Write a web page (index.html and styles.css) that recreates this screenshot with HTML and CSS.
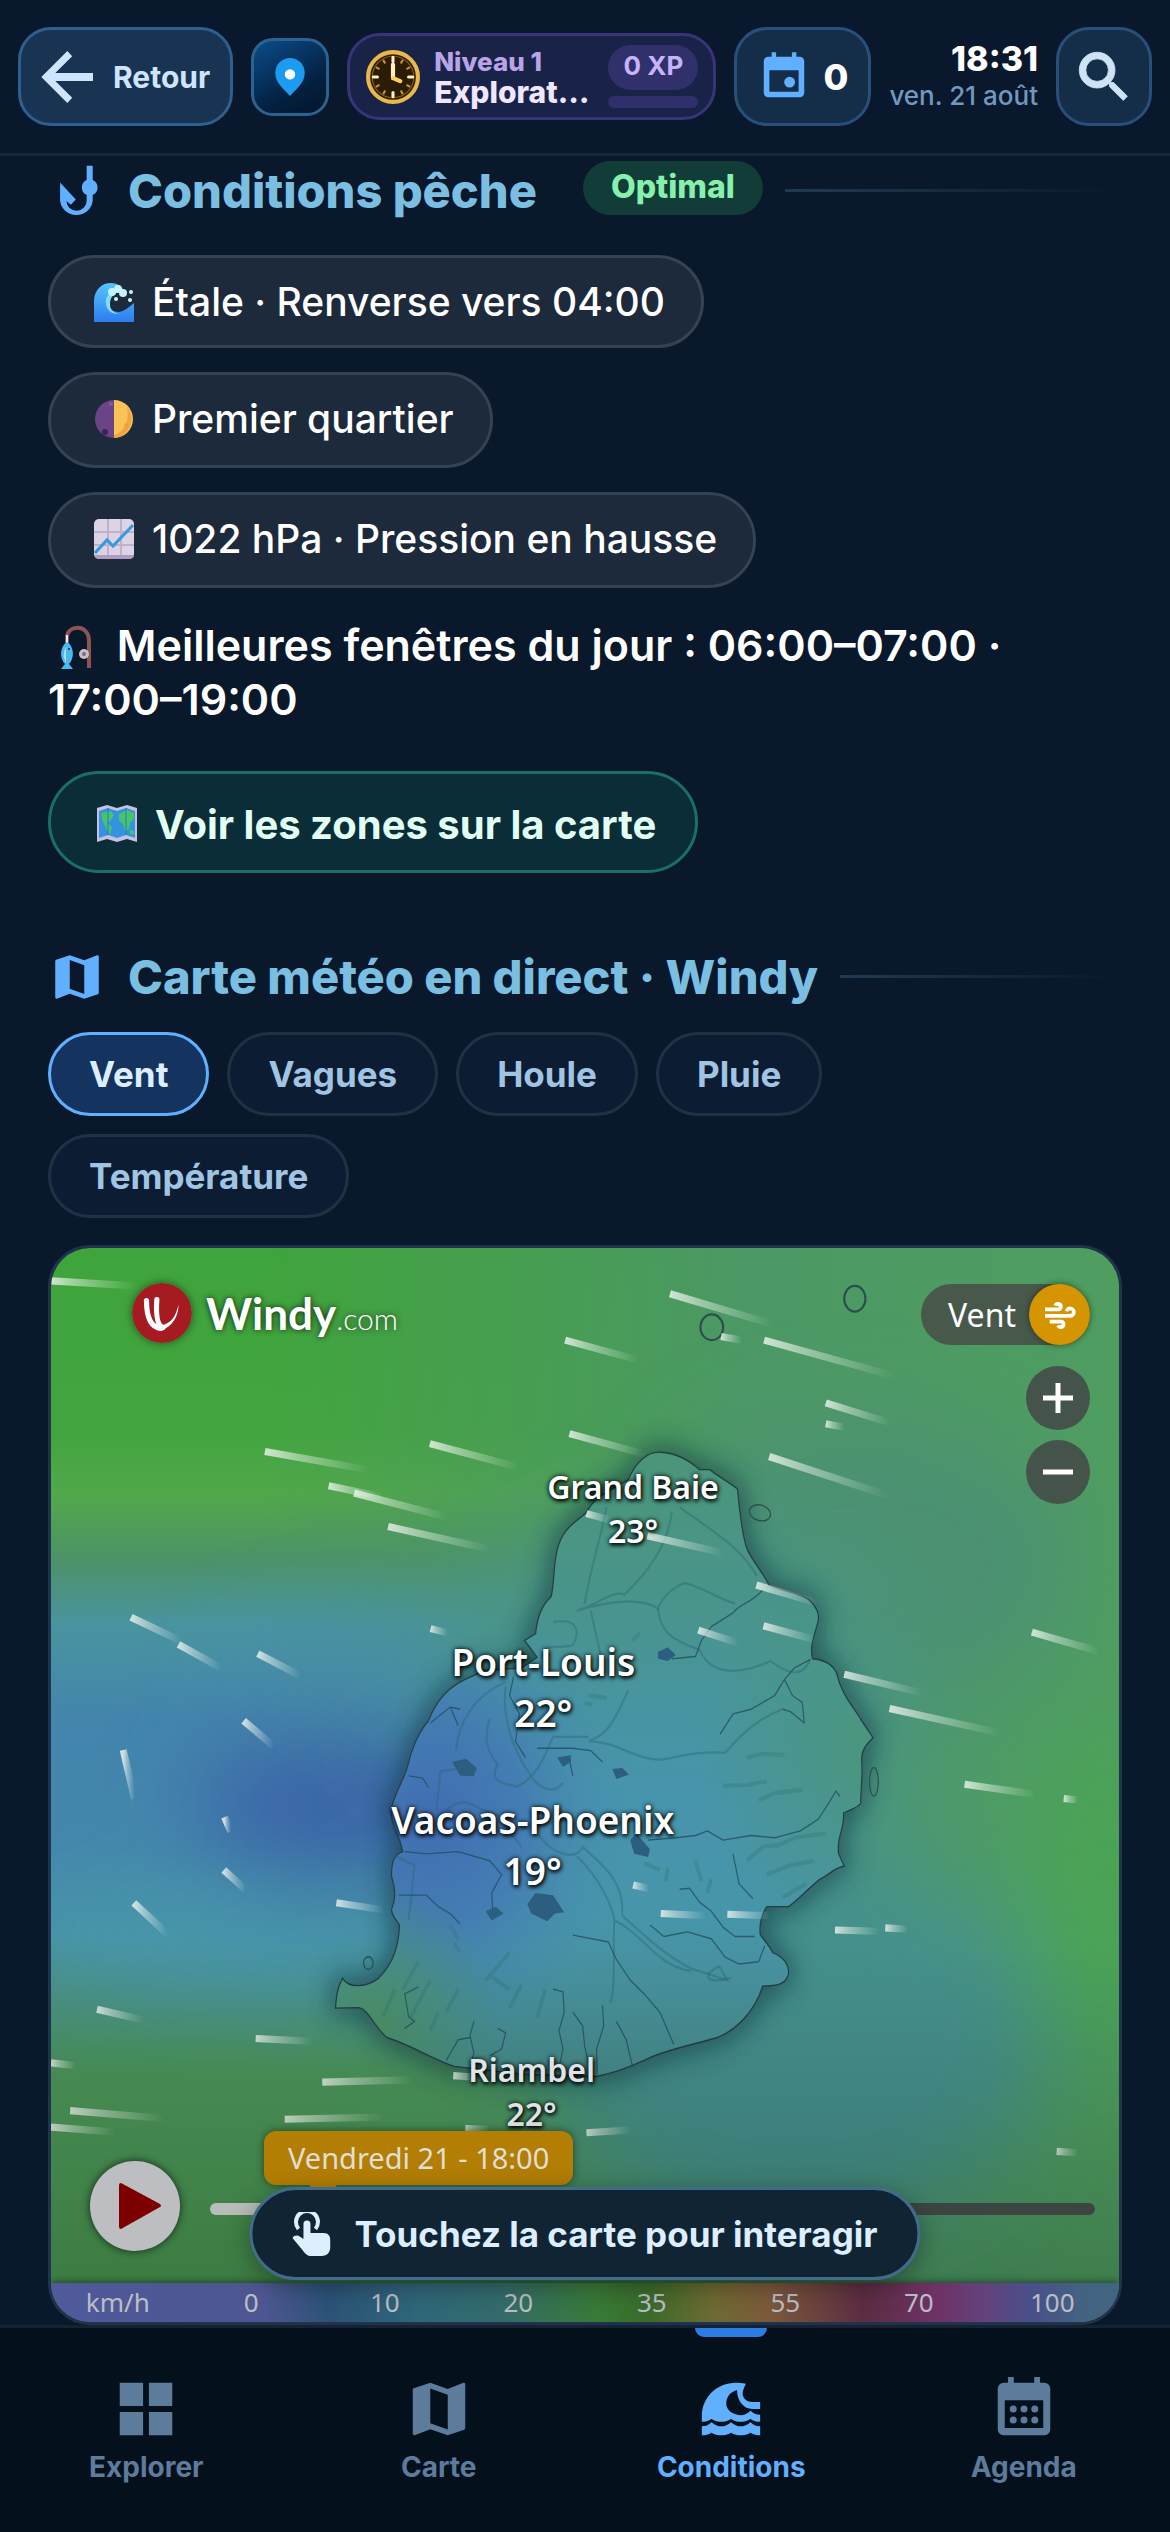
FILE: index.html
```
<!DOCTYPE html>
<html lang="fr">
<head>
  <meta charset="UTF-8" />
  <meta name="viewport" content="width=device-width, initial-scale=1.0"/>
  <title>Conditions</title>
  <link rel="stylesheet" href="styles.css">
</head>
<body>

  <!-- Barre du haut -->
  <header class="topbar">
    <button class="top-btn back-btn">
      <svg class="back-icon" viewBox="4 4 16 16"><path d="M20 10.800v2.400H8.400l5.200 5.200-1.500 1.600L4.100 12l8-8 1.500 1.600-5.200 5.200z"/></svg>
      Retour
    </button>

    <button class="pin-btn" aria-label="Position">
      <svg viewBox="0 0 34 44"><path d="M17 0a17 17 0 0 1 17 18c0 11-11 19-17 26C11 37 0 29 0 18A17 17 0 0 1 17 0z" fill="#1c9cf0"/><circle cx="17" cy="19" r="6" fill="#fff"/></svg>
    </button>

    <div class="level">
      <svg class="medal" viewBox="0 0 52 52">
        <circle cx="26" cy="26" r="24" fill="#2b1d05" stroke="#e8b84a" stroke-width="4"/>
        <circle cx="26" cy="26" r="20" fill="none" stroke="#8a6418"/>
        <g stroke="#fff0c4" stroke-width="3" stroke-linecap="round"><path d="M26 7v4M26 41v4M7 26h4M41 26h4"/></g>
        <g stroke="#c8922c" stroke-width="2"><path d="M16.500 9.500l2 3.500M35.500 9.500l-2 3.500M16.500 42.500l2-3.500M35.500 42.500l-2-3.500M9.500 16.500l3.500 2M42.500 16.500l-3.500 2M9.500 35.500l3.500-2M42.500 35.500l-3.500-2"/></g>
        <path d="M26 27V14" stroke="#fff0c4" stroke-width="4" stroke-linecap="round"/>
        <path d="M26 27l7 3" stroke="#ffd057" stroke-width="4" stroke-linecap="round"/>
      </svg>
      <div class="level-text">
        <span class="level-num">Niveau 1</span>
        <span class="level-name">Explorat…</span>
      </div>
      <div class="xp">
        <span class="xp-value">0 XP</span>
        <span class="xp-bar"></span>
      </div>
    </div>

    <button class="top-btn agenda-btn">
      <svg class="agenda-icon" viewBox="0 0 24 24"><path fill-rule="evenodd" d="M6.500 1h2v2h7V1h2v2H19a2 2 0 0 1 2 2v14a2 2 0 0 1-2 2H5a2 2 0 0 1-2-2V5a2 2 0 0 1 2-2h1.500zM5.500 9v9.500h13V9z"/><circle cx="14.500" cy="14.300" r="2.400"/></svg>
      0
    </button>

    <div class="clock">
      <strong>18:31</strong>
      <span>ven. 21 août</span>
    </div>

    <button class="top-btn search-btn" aria-label="Rechercher">
      <svg viewBox="0 0 24 24"><path d="M9.500,3A6.500,6.500 0 0,1 16,9.500C16,11.110 15.410,12.590 14.440,13.730L14.710,14H15.500L20.500,19L19,20.500L14,15.500V14.710L13.730,14.440C12.590,15.410 11.110,16 9.500,16A6.500,6.500 0 0,1 3,9.500A6.500,6.500 0 0,1 9.500,3M9.500,5.400A4.100,4.100 0 1,0 9.500,13.600A4.100,4.100 0 1,0 9.500,5.400Z" stroke="currentColor" stroke-width=".3"/></svg>
    </button>
  </header>

  <main class="content">

    <!-- Conditions pêche -->
    <section class="fishing">
      <h2 class="section-title">
        <svg viewBox="0 0 24 24"><path d="M16 1.500h2.500V7.400a3.400 3.400 0 0 1 0 6.200V16A6.800 6.800 0 0 1 5 16V8.500l6.500 7-2 2.200-1.900-1.600a4.200 4.200 0 0 0 8.400-.3v-2.200a3.400 3.400 0 0 1 0-6.200z"/></svg>
        Conditions pêche
        <span class="badge">Optimal</span>
      </h2>

      <ul class="pills">
        <li class="pill">
          <svg class="emoji" viewBox="0 0 40 40">
            <defs><linearGradient id="sea" x1="0" y1="0" x2="0" y2="1"><stop offset="0" stop-color="#53c6fb"/><stop offset="1" stop-color="#2e7cf0"/></linearGradient></defs>
            <path d="M0 40V18C1 7 8 1 17 1c6 0 11 3 13 8l-8 2c-7 0-9 5-8 10 1 6 5 9 11 9 6-1 10-5 15-9v19z" fill="url(#sea)"/>
            <path d="M24 10c-10 0-13 5-12 12 1 7 6 10 13 10-7-2-9-5-9-10 0-5 2-9 8-12z" fill="#7fe0f5"/>
            <g fill="#c5f4ff"><circle cx="18" cy="10" r="4"/><circle cx="24" cy="7" r="4"/><circle cx="29" cy="11" r="4"/><circle cx="37" cy="10" r="2"/><circle cx="36" cy="18" r="2"/><circle cx="22" cy="17" r="2"/></g>
          </svg>
          Étale · Renverse vers 04:00
        </li>
        <li class="pill pill-tall">
          <svg class="emoji" viewBox="0 0 40 40">
            <path d="M20 1a19 19 0 0 0 0 38z" fill="#6b4487"/>
            <path d="M20 1a19 19 0 0 1 0 38z" fill="#fbc255"/>
            <path d="M33 8a19 19 0 0 1-13 31v-3c10-2 16-15 13-28z" fill="#f0a63e"/>
            <circle cx="11" cy="33" r="3" fill="#3a2456"/><circle cx="17" cy="5" r="2" fill="#83599e"/><circle cx="32" cy="26" r="2" fill="#eda13e"/>
          </svg>
          Premier quartier
        </li>
        <li class="pill pill-tall">
          <svg class="emoji" viewBox="0 0 40 40">
            <rect width="40" height="40" rx="5" fill="#dcd3e4"/>
            <path d="M0 13h40M0 26h40M14 0v40M27 0v40" stroke="#bdb2c9" stroke-width="2"/>
            <path d="M1 34l12-13 6 6L39 6" fill="none" stroke="#3a98de" stroke-width="3"/>
            <path d="M1 36c0 3 2 4 5 4h28c3 0 6-1 6-4z" fill="#b19cc2"/>
          </svg>
          1022 hPa · Pression en hausse
        </li>
      </ul>

      <p class="windows">
        <svg class="rod" viewBox="0 0 52 44">
          <path d="M19 18V12C19 0 41-2 41 16v27" fill="none" stroke="#8a5553" stroke-width="4"/>
          <path d="M19 10v10" stroke="#e5eef5" stroke-width="2"/>
          <circle cx="36" cy="29" r="5" fill="#cabdcb"/><circle cx="36" cy="29" r="2" fill="#7a6a80"/>
          <path d="M19 17c7 4 8 16 2 22l4 5H13l4-5c-6-6-5-18 2-22z" fill="#4bb9ee"/><path d="M18 22c-3 5-3 11 0 16z" fill="#9fe3fb"/><circle cx="21" cy="24" r="1" fill="#124"/>
        </svg>
        Meilleures fenêtres du jour : 06:00–07:00 · 17:00–19:00
      </p>

      <button class="zones-btn">
        <svg class="emoji" viewBox="0 0 40 40">
          <path d="M0 4l10-3 10 3 10-3 10 3v34l-10-3-10 3-10-3-10 3z" fill="#c8c0e0"/>
          <path d="M2 7l9-3 9 3 9-3 9 3v27l-9-3-9 3-9-3-9 3z" fill="#3592df"/>
          <path d="M4 9l10-2 3 4-3 5-4 3 5 4-2 8-4-7-4-8zM22 10l8-4 7 3v6l-4 4-1 6-4 3-2-8-4-3zM33 26l4 1v4l-4-1z" fill="#45c46c"/>
          <path d="M11 4v27M29 4v27" stroke="#2c79c8"/>
        </svg>
        Voir les zones sur la carte
      </button>
    </section>

    <!-- Carte Windy -->
    <section class="weather">
      <h2 class="section-title">
        <svg viewBox="0 0 24 24"><path d="M15,19L9,16.890V5L15,7.110M20.500,3C20.440,3 20.390,3 20.340,3L15,5.100L9,3L3.360,4.900C3.150,4.970 3,5.150 3,5.380V20.500A0.500,0.500 0 0,0 3.500,21C3.550,21 3.610,21 3.660,20.970L9,18.900L15,21L20.640,19.100C20.850,19 21,18.850 21,18.620V3.500A0.500,0.500 0 0,0 20.500,3Z"/></svg>
        Carte météo en direct · Windy
      </h2>

      <div class="chips">
        <button class="chip active">Vent</button>
        <button class="chip">Vagues</button>
        <button class="chip">Houle</button>
        <button class="chip">Pluie</button>
        <button class="chip">Température</button>
      </div>

      <div class="map">
        <svg class="map-canvas" viewBox="30 39 1508 1504" preserveAspectRatio="none">
          <defs>
            <filter id="soft" x="-60%" y="-60%" width="220%" height="220%"><feGaussianBlur stdDeviation="65"/></filter>
            <filter id="halo" x="-20%" y="-20%" width="140%" height="140%"><feGaussianBlur stdDeviation="32"/></filter>
            <linearGradient id="base" x1="0" y1="0" x2="0" y2="1">
              <stop offset="0" stop-color="#3fa43c"/><stop offset=".17" stop-color="#42a53e"/><stop offset=".23" stop-color="#50a84a"/>
              <stop offset=".29" stop-color="#4d9268"/><stop offset=".35" stop-color="#49949f"/><stop offset=".44" stop-color="#4385ad"/>
              <stop offset=".56" stop-color="#4488ac"/><stop offset=".64" stop-color="#4794a8"/><stop offset=".7" stop-color="#4a927f"/>
              <stop offset=".77" stop-color="#4b9558"/><stop offset="1" stop-color="#4b9c52"/>
            </linearGradient>
            <linearGradient id="east" x1="0" y1="0" x2="1" y2="0">
              <stop offset=".2" stop-color="#4c9663" stop-opacity="0"/><stop offset=".65" stop-color="#4d976a" stop-opacity=".9"/><stop offset="1" stop-color="#4f9e60"/>
            </linearGradient>
            <linearGradient id="dim" x1="0" y1="0" x2="0" y2="1">
              <stop offset=".65" stop-opacity="0"/><stop offset="1" stop-opacity=".22"/>
            </linearGradient>
            <linearGradient id="landTint" x1="0" y1="0" x2="0" y2="1">
              <stop offset="0" stop-color="#4b9679"/><stop offset=".25" stop-color="#49948c"/><stop offset=".4" stop-color="#4795a0"/>
              <stop offset=".55" stop-color="#4794ad"/><stop offset=".75" stop-color="#4795aa"/><stop offset="1" stop-color="#468c8a"/>
            </linearGradient>
            <radialGradient id="landBlue" gradientUnits="userSpaceOnUse" cx="330" cy="870" r="520">
              <stop offset="0" stop-color="#416cb2"/><stop offset=".45" stop-color="#4379b4" stop-opacity=".85"/><stop offset="1" stop-color="#4590ae" stop-opacity="0"/>
            </radialGradient>
            <radialGradient id="landGreen" gradientUnits="userSpaceOnUse" cx="180" cy="1330" r="330">
              <stop offset="0" stop-color="#4b9165"/><stop offset="1" stop-color="#4b9165" stop-opacity="0"/>
            </radialGradient>
            <radialGradient id="landEast" gradientUnits="userSpaceOnUse" cx="1450" cy="720" r="450">
              <stop offset="0" stop-color="#4b967b"/><stop offset="1" stop-color="#4b967b" stop-opacity="0"/>
            </radialGradient>
            <linearGradient id="tail" x1="0" y1="0" x2="1" y2="0">
              <stop offset="0" stop-color="#f2f7f0" stop-opacity=".8"/><stop offset=".3" stop-color="#f2f7f0" stop-opacity=".5"/><stop offset="1" stop-color="#f2f7f0" stop-opacity="0"/>
            </linearGradient>
            <path id="coast" d="M912 70C950 72 985 88 1010 108L1036 108C1060 125 1085 135 1106 150C1112 200 1118 250 1130 280C1145 310 1170 330 1186 360C1220 374 1255 374 1285 390C1310 410 1315 425 1308 445C1300 470 1288 495 1296 520C1320 522 1345 530 1356 550C1370 600 1400 625 1420 655L1449 692C1435 705 1420 715 1420 740C1424 780 1416 810 1418 835C1405 848 1385 850 1374 856C1378 890 1355 910 1362 945L1376 972C1350 975 1340 990 1315 1000C1285 1020 1260 1045 1235 1060L1180 1060C1168 1075 1160 1100 1164 1122C1180 1140 1190 1150 1195 1160C1225 1170 1240 1190 1234 1210C1225 1235 1190 1232 1170 1233C1150 1290 1100 1330 1055 1345C1000 1360 920 1372 870 1395C820 1415 780 1425 750 1430L560 1425L390 1408C330 1390 290 1365 220 1345C190 1325 175 1285 150 1280L90 1281C92 1255 95 1235 108 1216C125 1240 170 1235 200 1215C240 1180 250 1140 252 1100C240 1085 230 1075 232 1065C245 1040 240 1015 232 995C230 965 240 945 260 940C255 910 232 890 230 850C240 810 265 780 272 755C280 720 300 680 325 655C345 610 375 580 430 560L470 545L560 540L600 517L568 480L596 465C600 430 610 405 635 385C645 350 640 300 655 270C670 230 710 215 725 200C740 175 760 165 790 150L830 130C850 90 880 68 912 70Z"/>
          </defs>

          <rect x="30" y="39" width="1508" height="1504" fill="url(#base)"/>
          <rect x="30" y="39" width="1508" height="1504" fill="url(#east)"/>
          <g filter="url(#soft)">
            <ellipse cx="1180" cy="480" rx="300" ry="200" fill="#4b9172"/>
            <ellipse cx="900" cy="750" rx="340" ry="330" fill="#4a9486"/>
            <ellipse cx="1080" cy="1150" rx="350" ry="260" fill="#45908c"/>
            <ellipse cx="480" cy="640" rx="180" ry="60" fill="#4790a8"/>
            <ellipse cx="420" cy="1010" rx="380" ry="60" fill="#4695aa"/>
            <ellipse cx="440" cy="820" rx="210" ry="110" fill="#3b65a8"/>
            <ellipse cx="1520" cy="950" rx="90" ry="230" fill="#4aa452"/>
          </g>

          <g transform="translate(381.400 280) scale(.5586 .6428)">
            <use href="#coast" class="coast-shadow" filter="url(#halo)"/>
            <use href="#coast" fill="url(#landTint)"/>
            <use href="#coast" fill="url(#landBlue)"/>
            <use href="#coast" fill="url(#landGreen)"/>
            <use href="#coast" class="shore" fill="url(#landEast)"/>
            <!-- îlots -->
            <g class="coast">
              <ellipse cx="1163" cy="202" rx="27" ry="17" transform="rotate(12 1163 202)"/>
              <ellipse cx="1451" cy="788" rx="11" ry="31"/>
              <ellipse cx="173" cy="1183" rx="12" ry="14"/>
            </g>
            <!-- routes -->
            <g class="roads">
              <path d="M775 190C760 260 735 320 720 400M940 200C930 280 870 340 820 380C790 370 760 400 700 415M700 415C780 395 860 385 905 410C920 380 950 360 975 355C1020 365 1060 390 1100 400"/>
              <path d="M905 410C910 460 940 480 1010 500C1040 560 1110 555 1190 525C1220 545 1270 570 1290 520M960 190C1040 240 1120 280 1155 340M735 415L760 510"/>
              <path d="M640 440C700 430 710 460 690 490C650 500 620 480 610 520M830 590C800 640 790 680 730 700C800 700 850 740 910 740C960 735 1000 720 1075 725C1120 680 1160 650 1220 630"/>
              <path d="M520 570C440 600 400 660 395 720M520 580C510 650 540 720 580 770C600 800 640 820 665 790M480 650C460 700 480 730 500 750C470 800 540 790 550 800M545 800C600 780 620 730 640 690L730 690"/>
              <path d="M345 850L355 765L395 760M600 900C640 950 700 960 715 930C780 980 820 1010 815 1080M700 950C760 1000 790 1060 795 1090C870 1120 900 1190 990 1200M815 1080C880 1130 930 1170 990 1195L1080 1220L1060 1190M795 1090C790 1150 800 1220 785 1270"/>
              <path d="M240 950L290 970L275 1090M370 850C420 810 440 850 500 860L560 930M1060 1190C1010 1210 1030 1230 1090 1215"/>
            </g>
            <!-- rivières -->
            <g class="rivers">
              <path d="M1170 370C1140 400 1110 400 1095 420L1040 450L1015 480L1000 515L940 520M1290 522L1250 540L1225 565L1200 600L1140 630L1095 640L1062 685M1225 565L1245 600L1270 615L1275 660L1240 635L1220 630"/>
              <path d="M540 560L530 600L555 640L545 700L570 735M600 715L690 715L735 720L765 745M680 735L690 775M330 660L380 625L405 630M380 625L400 665M275 775L310 780L325 800"/>
              <path d="M880 915L950 910L1000 905L1030 895L1070 915L1140 905L1200 910L1265 895L1310 870L1340 830L1355 808L1365 820M265 940L320 945L400 940L480 960L510 990L485 1030L488 1080M250 1035L320 1035L350 1060L380 1075L405 1098"/>
              <path d="M960 1022L985 1020L1010 1050L1040 1070L1070 1105L1100 1125L1150 1125M885 1100L920 1125L980 1115L1040 1130L1075 1170L1110 1185L1160 1180L1175 1145M690 1122L780 1137L800 1175L835 1220L870 1250L910 1290L945 1360"/>
              <path d="M640 1240L665 1245L668 1290L655 1330L665 1370L658 1400M690 1290L715 1320L720 1365L728 1395M765 1275L768 1320L750 1370L752 1425M800 1310L825 1350L840 1405M300 1235L265 1250L275 1300L290 1310L265 1325M440 1310L430 1340L440 1380L432 1400M500 1325L520 1335L510 1370L480 1385M370 1395L400 1350L430 1345M1095 945L1110 1010L1145 1042"/>
            </g>
            <!-- lacs et reliefs -->
            <g class="lakes">
              <path d="M385 745L420 738L447 758L440 776L405 774zM905 505L930 495L950 512L930 525L905 520zM650 735L685 730L685 745L665 755zM790 760L815 758L832 772L800 782zM575 1055L595 1030L640 1035L668 1072L645 1075L625 1092L585 1075zM835 915L850 900L885 935L880 952L845 945zM470 1070L495 1060L515 1075L485 1090z"/>
            </g>
            <g class="relief">
              <path d="M1130 735l40-8 55 3M1070 797l60-2 50-8M1160 828l40-15 70-8M870 965l40 15M930 975l-5 30M1000 960l15 45M1040 1000l-10 30M1130 960l40-30 40-5M1180 990l60-20 60-10M1220 1040l60-30M1200 930l50-20 80-10M380 1100l20 30M390 1140l15 20M300 1180l-40 60M330 1220l-50 80M240 1240l-30 60M480 1210l50 30M530 1160l-60 60M560 1230l-30 50M620 1240l-20 60M400 1240l-30 50M350 1290l-20 40M730 600l45 5M740 620l-20-5M840 480l20-15"/>
            </g>
          </g>

          <g class="coast"><ellipse cx="963" cy="150" rx="16" ry="18"/><ellipse cx="1165" cy="110" rx="15" ry="18"/></g>

          <!-- particules de vent -->
          <g class="wind">
            <path d="M904 103L1050 146"/><path d="M756 168L860 196"/><path d="M1037 168L1220 218"/><path d="M1124 256L1215 284"/>
            <path d="M1124 285L1150 290"/><path d="M762 299L870 328"/><path d="M565 313L690 346"/><path d="M332 324L480 350"/>
            <path d="M422 372L500 388"/><path d="M458 382L590 416"/><path d="M506 429L650 461"/><path d="M1044 331L1210 385"/>
            <path d="M786 411L820 420"/><path d="M872 442L980 466"/><path d="M1026 511L1112 536"/><path d="M1036 568L1110 588"/>
            <path d="M944 574L1000 592"/><path d="M143 556L215 590"/><path d="M210 594L270 627"/><path d="M322 607L382 638"/>
            <path d="M566 572L590 578"/><path d="M302 701L345 737"/><path d="M132 742L148 810"/><path d="M275 836L284 856"/>
            <path d="M274 910L305 938"/><path d="M147 956L195 1000"/><path d="M433 956L500 966"/><path d="M1415 577L1510 604"/>
            <path d="M1150 636L1260 662"/><path d="M1214 684L1370 718"/><path d="M1320 790L1420 804"/><path d="M852 931L874 936"/>
            <path d="M891 971L955 974"/><path d="M985 972L1045 974"/><path d="M1137 994L1200 996"/><path d="M1208 991L1240 993"/>
            <path d="M95 1105L160 1120"/><path d="M319 1146L400 1150"/><path d="M413 1207L540 1204"/><path d="M598 1198L640 1201"/>
            <path d="M57 1247L190 1258"/><path d="M360 1259L500 1256"/><path d="M30 1270L120 1277"/><path d="M30 1180L65 1184"/>
            <path d="M786 1278L850 1274"/><path d="M1450 1304L1480 1306"/><path d="M1460 810L1480 812"/><path d="M30 85L150 92"/>
            <path d="M976 163L1005 168"/><path d="M615 1272L650 1273"/>
          </g>
          <rect x="30" y="39" width="1508" height="1504" fill="url(#dim)"/>
        </svg>

        <p class="place grand-baie">Grand Baie<br>23°</p>
        <p class="place place-lg port-louis">Port-Louis<br>22°</p>
        <p class="place place-lg vacoas">Vacoas-Phoenix<br>19°</p>
        <p class="place riambel">Riambel<br>22°</p>

        <a class="windy-logo" href="#">
          <svg viewBox="0 0 58 58"><circle cx="29" cy="29" r="29" fill="#a51b21"/><path d="M14 17C14 32 18 43 28 44M24 16C23 30 24 41 30 43" fill="none" stroke="#fff" stroke-width="5" stroke-linecap="round"/><path d="M29 45C38 43 45 33 45 21C42 33 38 39 28 41z" fill="#fff"/></svg>
          <span class="windy-name">Windy</span><span class="windy-com">.com</span>
        </a>

        <div class="map-controls">
          <button class="layer-btn">Vent
            <span class="layer-icon"><svg viewBox="0 0 36 30"><path d="M2 9h14a3 3 0 1 0-3-4M2 16h27a4 4 0 1 0-4-5M7 22h12a3 3 0 1 1-3 4" fill="none" stroke="#fff" stroke-width="4"/></svg></span>
          </button>
          <button class="zoom-btn" aria-label="Zoom avant"><svg viewBox="0 0 32 32"><path d="M16 1v30M1 16h30"/></svg></button>
          <button class="zoom-btn" aria-label="Zoom arrière"><svg viewBox="0 0 32 32"><path d="M1 16h30"/></svg></button>
        </div>

        <div class="map-footer">
          <div class="time-tip">Vendredi 21 - 18:00</div>
          <div class="player">
            <button class="play-btn" aria-label="Lecture"><svg viewBox="0 0 42 46"><path d="M2 0l39 21q2 2 0 3L2 46q-2 0-2-2V2q0-2 2-2z" fill="#7d0000"/></svg></button>
            <input class="timeline" type="range" min="0" max="100" value="13" aria-label="Heure de prévision">
          </div>
          <div class="legend">
            <span>km/h</span><span>0</span><span>10</span><span>20</span><span>35</span><span>55</span><span>70</span><span>100</span>
          </div>
        </div>

        <button class="touch-hint">
          <svg viewBox="0 0 38 44"><path d="M6 17A11 11 0 1 1 23 17" fill="none" stroke="#dceeff" stroke-width="4"/><path d="M11 12a3.500 3.500 0 0 1 7 0v9h13c5 0 7 3 7 8v5c0 6-3 10-9 10H19c-4 0-6-2-9-6L0 26c2-3 5-3 8-1l3 2z"/></svg>
          Touchez la carte pour interagir
        </button>
      </div>
    </section>
  </main>

  <!-- Navigation -->
  <nav class="tabbar">
    <a class="tab" href="#">
      <svg viewBox="0 0 24 24"><path d="M3,11H11V3H3M3,21H11V13H3M13,21H21V13H13M13,3V11H21V3"/></svg>
      Explorer
    </a>
    <a class="tab" href="#">
      <svg viewBox="0 0 24 24"><path d="M15,19L9,16.890V5L15,7.110M20.500,3C20.440,3 20.390,3 20.340,3L15,5.100L9,3L3.360,4.900C3.150,4.970 3,5.150 3,5.380V20.500A0.500,0.500 0 0,0 3.500,21C3.550,21 3.610,21 3.660,20.970L9,18.900L15,21L20.640,19.100C20.850,19 21,18.850 21,18.620V3.500A0.500,0.500 0 0,0 20.500,3Z"/></svg>
      Carte
    </a>
    <a class="tab active" href="#">
      <svg viewBox="0 0 24 24"><path d="M2 17.900c1.200 0 2.300-.4 3.330-1.400 2.060 1.900 4.610 1.900 6.670 0 2.060 1.900 4.610 1.900 6.670 0 1 1 2.100 1.400 3.330 1.400V21c-1.200 0-2.300-.3-3.330-.9-2.060 1.200-4.610 1.200-6.670 0-2.060 1.200-4.610 1.200-6.670 0-1 .6-2.170.9-3.330.9z"/><path d="M19.330 12H22V9.600h-2.600C17.500 9.600 16 8.500 16 6.700c0-1 .4-1.900 1.100-3.400C15.700 3.100 14.700 3 13.700 3 7.200 3 2 7.900 2 14.500v1.900c1.200 0 2.300-.3 3.330-1 2.060 1.300 4.610 1.300 6.670 0 2.060 1.300 4.610 1.300 6.670 0 1 .7 2.100 1 3.330 1V14c-1.200 0-2.300-.4-3.330-1.400-.9.900-1.900 1.400-3 1.500-2.900 0-5.300-1.600-5.300-4 0-2 1.200-3.900 3.700-4.600C14.100 9.500 16.500 12 19.330 12z"/></svg>
      Conditions
    </a>
    <a class="tab" href="#">
      <svg viewBox="0 0 24 24"><path fill-rule="evenodd" d="M6.500 1h2v2h7V1h2v2H19a2 2 0 0 1 2 2v14a2 2 0 0 1-2 2H5a2 2 0 0 1-2-2V5a2 2 0 0 1 2-2h1.500zM5.400 9v9.500h13.200V9z"/><circle cx="8.300" cy="12" r="1.200"/><circle cx="12" cy="12" r="1.200"/><circle cx="15.700" cy="12" r="1.200"/><circle cx="8.300" cy="15.800" r="1.200"/><circle cx="12" cy="15.800" r="1.200"/><circle cx="15.700" cy="15.800" r="1.200"/></svg>
      Agenda
    </a>
  </nav>

</body>
</html>
```
FILE: styles.css
```
* {
  box-sizing: border-box;
}

body {
  margin: 0;
  height: 100vh;
  display: flex;
  flex-direction: column;
  background-color: #09182b;
  color: #f7fbff;
  font-family: Inter, "Noto Sans", sans-serif;
  overflow: hidden;
}

button {
  font-family: inherit;
  cursor: pointer;
}

svg {
  display: block;
  flex-shrink: 0;
  fill: currentColor;
}

/* Barre du haut */
.topbar {
  flex-shrink: 0;
  display: flex;
  align-items: center;
  gap: 18px;
  height: 156px;
  padding: 0 18px;
  background-color: #09182d;
  border-bottom: 3px solid #15253a;
}

.top-btn {
  display: flex;
  align-items: center;
  justify-content: center;
  height: 99px;
  padding: 0 20px;
  background-color: #142d49;
  border: 3px solid #28507a;
  border-radius: 33px;
  color: #cfe3f7;
}

.back-btn {
  gap: 20px;
  background-color: #193453;
  border-color: #2e5f8f;
  color: #cfe5ff;
  font-size: 30px;
  font-weight: 700;
}

.back-icon {
  width: 52px;
  height: 52px;
}

.pin-btn {
  display: flex;
  align-items: center;
  justify-content: center;
  width: 78px;
  height: 78px;
  padding: 0;
  border: 3px solid #2d6190;
  border-radius: 22px;
  background: linear-gradient(150deg, #0a4d8c, #042040 65%, #03152b);
}

.pin-btn svg {
  width: 34px;
  height: 38px;
}

.level {
  flex: 1;
  display: flex;
  align-items: center;
  height: 87px;
  padding: 0 15px 0 16px;
  background-color: #192348;
  border: 3px solid #393478;
  border-radius: 33px;
}

.medal {
  width: 54px;
  height: 54px;
}

.level-text {
  flex: 1;
  display: flex;
  flex-direction: column;
  margin-left: 14px;
  line-height: 30px;
  font-weight: 800;
  white-space: nowrap;
}

.level-num {
  font-size: 26px;
  color: #b9a4e6;
}

.level-name {
  font-size: 30px;
  color: #f0e6ff;
}

.xp {
  display: flex;
  flex-direction: column;
  gap: 6px;
  width: 90px;
}

.xp-value {
  height: 45px;
  line-height: 42px;
  border-radius: 23px;
  background-color: #30316a;
  color: #c8b3fb;
  font-size: 26px;
  font-weight: 700;
  text-align: center;
}

.xp-bar {
  height: 12px;
  border-radius: 6px;
  background-color: #2f2f6b;
}

.agenda-btn {
  gap: 12px;
  color: #fff;
  font-size: 36px;
  font-weight: 800;
}

.agenda-icon {
  width: 54px;
  height: 54px;
  color: #60b0ff;
}

.clock {
  display: flex;
  flex-direction: column;
  align-items: flex-end;
  line-height: 37px;
}

.clock strong {
  color: #fff;
  font-size: 34px;
  font-weight: 800;
}

.clock span {
  color: #7398bd;
  font-size: 26px;
  font-weight: 500;
}

.search-btn {
  width: 96px;
  padding: 0;
}

.search-btn svg {
  width: 66px;
  height: 66px;
}

/* Contenu */
.content {
  flex: 1;
  min-height: 0;
  padding: 0 48px;
  overflow: hidden;
}

.section-title {
  display: flex;
  align-items: center;
  gap: 22px;
  height: 69px;
  margin: 0;
  color: #7abfe2;
  font-size: 47px;
  font-weight: 800;
  white-space: nowrap;
}

.section-title svg {
  width: 58px;
  height: 58px;
  color: #60b0ff;
}

.section-title::after {
  content: "";
  flex: 1;
  height: 3px;
  background: linear-gradient(90deg, #213a53, transparent);
}

.badge {
  height: 54px;
  margin: 0 0 6px 24px;
  padding: 0 28px;
  border-radius: 27px;
  background-color: #113c38;
  color: #87f0ad;
  font-size: 32px;
  line-height: 51px;
}

.pills {
  display: flex;
  flex-direction: column;
  align-items: flex-start;
  gap: 24px;
  margin: 30px 0 0;
  padding: 0;
  list-style: none;
}

.pill {
  display: flex;
  align-items: center;
  gap: 18px;
  height: 93px;
  padding: 0 36px 0 43px;
  background-color: #1c2a3c;
  border: 3px solid #344353;
  border-radius: 48px;
  color: #fff;
  font-size: 39px;
  font-weight: 500;
}

.pill-tall {
  height: 96px;
  padding-bottom: 3px;
}

.emoji {
  width: 40px;
  height: 40px;
}

.windows {
  margin: 30px 0 0;
  color: #fff;
  font-size: 43px;
  font-weight: 600;
  line-height: 54px;
}

.rod {
  display: inline-block;
  width: 52px;
  height: 44px;
  margin-right: 6px;
  vertical-align: -8px;
}

.zones-btn {
  display: flex;
  align-items: center;
  gap: 18px;
  height: 102px;
  margin-top: 45px;
  padding: 4px 39px 0 46px;
  background-color: #0a2d38;
  border: 3px solid #1a7067;
  border-radius: 51px;
  color: #e2fff4;
  font-size: 40px;
  font-weight: 700;
}

.weather {
  margin-top: 69px;
}

.chips {
  display: flex;
  flex-wrap: wrap;
  gap: 18px;
  max-width: 880px;
  margin: 21px 0 27px;
}

.chip {
  height: 84px;
  padding: 0 38px;
  background-color: #0c1d33;
  border: 3px solid #213144;
  border-radius: 42px;
  color: #a1c4e2;
  font-size: 35px;
  font-weight: 700;
}

.chip.active {
  background-color: #14335e;
  border-color: #60b0ff;
  color: #dceeff;
}

/* Carte */
.map {
  position: relative;
  height: 1080px;
  border: 3px solid #20334c;
  border-radius: 42px;
  overflow: hidden;
  font-family: "Noto Sans", "Open Sans", sans-serif;
}

.map-canvas {
  width: 100%;
  height: 100%;
}

.coast-shadow {
  fill: #0d2c3a;
  stroke: #0d2c3a;
  stroke-width: 24;
  opacity: 0.6;
}

.shore {
  stroke: #1f4046;
  stroke-width: 3;
}

.coast {
  fill: none;
  stroke: #2a4f4c;
  stroke-width: 3;
}

.roads {
  fill: none;
  stroke: #2b6573;
  stroke-opacity: 0.4;
  stroke-width: 5;
}

.rivers {
  fill: none;
  stroke: #244d62;
  stroke-opacity: 0.8;
  stroke-width: 3;
  stroke-linejoin: round;
}

.lakes {
  fill: #2c5e80;
}

.relief {
  fill: none;
  stroke: #2f6f72;
  stroke-opacity: 0.3;
  stroke-width: 9;
}

.wind path {
  fill: none;
  stroke: url(#tail);
  stroke-width: 10;
}

.place {
  position: absolute;
  margin: 0;
  transform: translate(-50%, -50%);
  color: #fff;
  font-size: 32px;
  font-weight: 600;
  line-height: 44px;
  text-align: center;
  text-shadow: 0 0 5px #000, 1px 2px 4px #000;
  white-space: nowrap;
}

.place-lg {
  font-size: 37px;
  line-height: 51px;
}

.grand-baie {
  left: 54.5%;
  top: 24.3%;
}

.port-louis {
  left: 46.1%;
  top: 40.9%;
}

.vacoas {
  left: 45.1%;
  top: 55.6%;
}

.riambel {
  left: 45%;
  top: 78.6%;
  color: #dfe3e3;
}

.windy-logo {
  position: absolute;
  left: 81px;
  top: 35px;
  display: flex;
  align-items: center;
  color: #fff;
  font-family: Lato, sans-serif;
  text-decoration: none;
  text-shadow: 0 0 6px rgba(0, 0, 0, 0.8);
}

.windy-logo svg {
  width: 60px;
  height: 60px;
  border-radius: 50%;
  box-shadow: 0 0 8px rgba(0, 0, 0, 0.5);
}

.windy-name {
  margin-left: 14px;
  font-size: 44px;
  font-weight: 700;
}

.windy-com {
  padding-top: 10px;
  font-size: 30px;
  font-weight: 300;
}

.map-controls {
  position: absolute;
  right: 29px;
  top: 36px;
  display: flex;
  flex-direction: column;
  align-items: flex-end;
  gap: 10px;
}

.layer-btn {
  display: flex;
  align-items: center;
  gap: 13px;
  height: 61px;
  margin-bottom: 11px;
  padding: 0 0 0 27px;
  border: none;
  border-radius: 31px;
  background-color: #48594c;
  color: #fff;
  font-size: 32px;
}

.layer-icon {
  display: flex;
  align-items: center;
  justify-content: center;
  width: 61px;
  height: 61px;
  border-radius: 50%;
  background-color: #d59500;
  box-shadow: 0 0 6px rgba(0, 0, 0, 0.5);
}

.layer-icon svg {
  width: 34px;
  height: 28px;
}

.zoom-btn {
  display: flex;
  align-items: center;
  justify-content: center;
  width: 64px;
  height: 64px;
  padding: 0;
  border: none;
  border-radius: 50%;
  background-color: #45544b;
}

.zoom-btn svg {
  width: 32px;
  height: 32px;
  stroke: #fff;
  stroke-width: 5;
}

.map-footer {
  position: absolute;
  left: 0;
  right: 0;
  bottom: 0;
}

.time-tip {
  position: relative;
  width: max-content;
  height: 54px;
  margin-left: 213px;
  padding: 0 24px;
  border-radius: 12px;
  background-color: #b27e04;
  box-shadow: 0 0 8px rgba(0, 0, 0, 0.5);
  color: #e0ded5;
  font-size: 29px;
  line-height: 54px;
}

.time-tip::after {
  content: "";
  position: absolute;
  left: 45px;
  top: 54px;
  border: 14px solid transparent;
  border-top-color: #b27e04;
}

.player {
  display: flex;
  align-items: center;
  gap: 30px;
  height: 98px;
  padding: 0 24px 0 39px;
}

.play-btn {
  display: flex;
  flex-shrink: 0;
  align-items: center;
  justify-content: center;
  width: 90px;
  height: 90px;
  margin-top: -56px;
  padding: 0 0 0 10px;
  border: none;
  border-radius: 50%;
  background-color: #bdbec1;
  box-shadow: 0 0 8px rgba(0, 0, 0, 0.7);
}

.play-btn svg {
  width: 42px;
  height: 46px;
}

.timeline {
  flex: 1;
  height: 12px;
  margin: -50px 0 0;
  appearance: none;
  border-radius: 6px;
  background: linear-gradient(90deg, #b8bdba 13%, #3d4542 13%);
}

.timeline::-webkit-slider-thumb {
  appearance: none;
  width: 12px;
  height: 12px;
}

.legend {
  display: flex;
  height: 39px;
  background: linear-gradient(90deg, #50599a, #4d5690 20%, #2c5277 26%, #2f6679 34%, #336b6c 42%, #387a37 51%, #3a6b2a 56%, #6e6a32 62%, #7c5a3a 67%, #5c2d42 76%, #6e3166 83%, #65407a 87%, #48508a 92%, #436480 97%);
  box-shadow: 0 0 8px rgba(0, 0, 0, 0.6);
  color: #b9bdc6;
  font-size: 26px;
  line-height: 38px;
}

.legend span {
  flex: 1;
  text-align: center;
}

.touch-hint {
  position: absolute;
  left: 50%;
  bottom: 42px;
  transform: translateX(-50%);
  display: flex;
  align-items: center;
  gap: 24px;
  height: 93px;
  padding: 0 40px;
  background-color: #102433;
  border: 3px solid #406c89;
  border-radius: 47px;
  box-shadow: 0 6px 24px rgba(0, 0, 0, 0.35);
  color: #dceeff;
  font-family: Inter, sans-serif;
  font-size: 35px;
  font-weight: 700;
  white-space: nowrap;
}

.touch-hint svg {
  width: 38px;
  height: 44px;
}

/* Navigation */
.tabbar {
  flex-shrink: 0;
  display: flex;
  height: 207px;
  background-color: #05101d;
  border-top: 3px solid #152232;
}

.tab {
  position: relative;
  flex: 1;
  display: flex;
  flex-direction: column;
  align-items: center;
  gap: 6px;
  padding-top: 46px;
  color: #5d7c9c;
  font-size: 28px;
  font-weight: 700;
  text-decoration: none;
}

.tab svg {
  width: 70px;
  height: 70px;
}

.tab.active {
  color: #60b0ff;
}

.tab.active::before {
  content: "";
  position: absolute;
  top: 0;
  width: 72px;
  height: 9px;
  border-radius: 0 0 9px 9px;
  background-color: #2b7de4;
}
```
